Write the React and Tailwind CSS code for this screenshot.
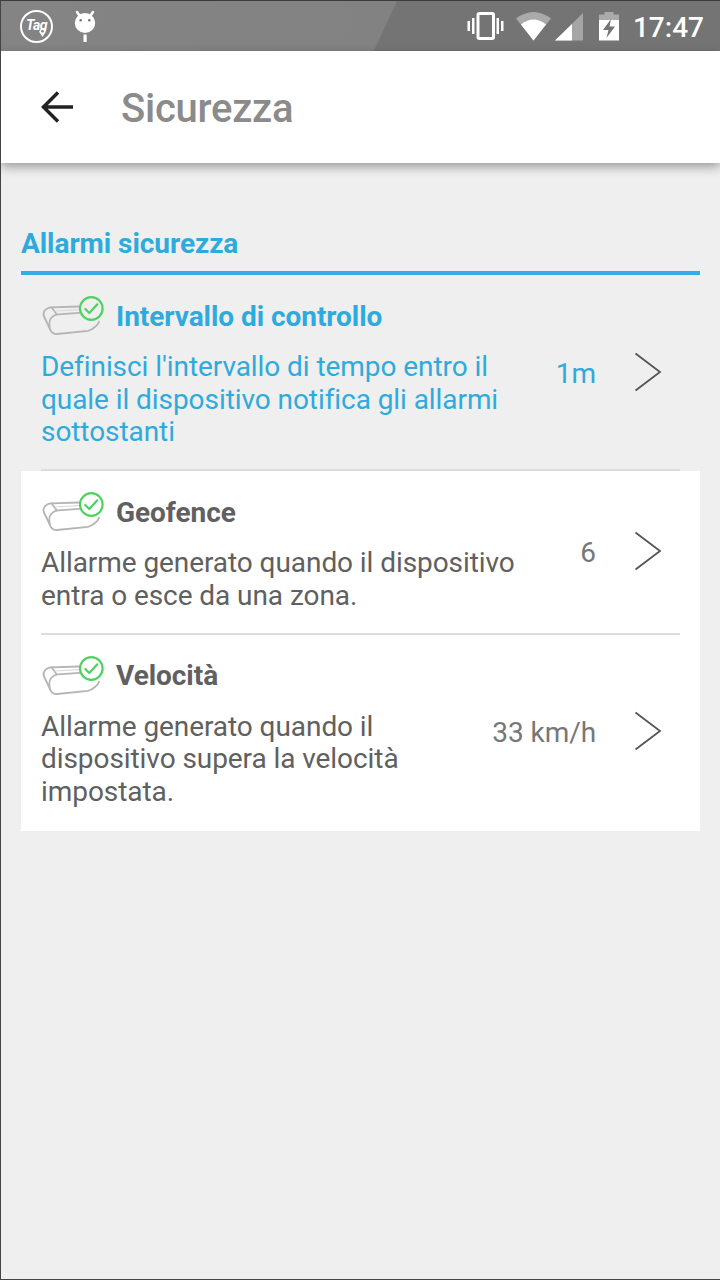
import React from 'react'

const alarms = [
  {
    title: 'Intervallo di controllo',
    text: ["Definisci l'intervallo di tempo entro il", 'quale il dispositivo notifica gli allarmi', 'sottostanti'],
    value: '1m',
    active: true,
  },
  {
    title: 'Geofence',
    text: ['Allarme generato quando il dispositivo', 'entra o esce da una zona.'],
    value: '6',
  },
  {
    title: 'Velocità',
    text: ['Allarme generato quando il', 'dispositivo supera la velocità', 'impostata.'],
    value: '33 km/h',
  },
]

const DeviceIcon = () => (
  <svg className="w-[63px] h-11 shrink-0" viewBox="0 0 63 44" fill="none" strokeLinecap="round" strokeLinejoin="round">
    <g stroke="#b5b5b5" strokeWidth="1.800">
      <path d="M38 12.500 L10 13.300 C5 13.500 1.500 18 2.800 22 L8.500 34 Q10.500 40.500 16 40 L47 36.800 Q50 36.300 54 33 Q57 31 58 27.700" />
      <path d="M38.500 18.900 L17 20.300 C11 21 8 25.500 8.300 30 L8.800 35" />
      <path d="M10.700 13.500 L15.500 20" />
    </g>
    <path d="M14 17 L38 15.700" stroke="#dcdcdc" strokeWidth="1.200" />
    <circle cx="50.300" cy="14.500" r="11.300" stroke="#4cd35e" strokeWidth="2.200" />
    <path d="M44.300 15 L48.300 19 L56.300 10.300" stroke="#4cd35e" strokeWidth="2.200" />
  </svg>
)

const StatusBar = () => (
  <div className="h-[51px] shrink-0 border-t border-[#3c3c3c] bg-linear-[115deg,#848484_0%,#828282_53.200%,#747474_53.500%,#747474_100%] pl-[19px] pr-4 flex items-center justify-between">
    <div className="flex items-center gap-5">
      <div className="relative size-[33px] rounded-full border-2 border-white flex items-center justify-center">
        <span className="text-white text-[14px] leading-none font-bold italic tracking-[-0.5px] pb-[2px]">Tag</span>
        <svg className="absolute left-[17px] top-[16px] w-[7px] h-[9px]" viewBox="0 0 7 9">
          <path d="M3.500 9 L0.800 4.800 A3 3 0 1 1 6.200 4.800z" fill="white" />
          <circle cx="3.500" cy="3.300" r="1.300" fill="#848484" />
        </svg>
      </div>
      <svg className="w-6 h-8" viewBox="0 0 24 32" fill="white">
        <path d="M4 2 L7.500 7 M20 2 L16.500 7" stroke="white" strokeWidth="2.500" strokeLinecap="round" />
        <ellipse cx="12" cy="13" rx="10.200" ry="10" />
        <rect x="10.500" y="24.500" width="3.200" height="7.500" />
        <circle cx="7.700" cy="10.300" r="1.300" fill="#777" />
        <circle cx="16.300" cy="10.300" r="1.300" fill="#777" />
      </svg>
    </div>
    <div className="flex items-center">
      <svg className="w-[37px] h-8 mr-[12px]" viewBox="0 0 37 32" fill="white">
        <rect x="11" y="3.500" width="15.500" height="25" rx="1.500" fill="none" stroke="white" strokeWidth="3" />
        <path d="M0.500 11 h2.500 v10 h-2.500z M5 8 h2.500 v16 h-2.500z M29.500 8 h2.500 v16 h-2.500z M34 11 h2.500 v10 h-2.500z" />
      </svg>
      <svg className="w-9 h-8 mr-[3px]" viewBox="0 0 36 32">
        <path d="M0 8.500 Q17.500 -4.500 35 8.500 L17.500 30.500z" fill="#aaa" />
        <path d="M5 14.500 Q17.500 4.500 30 14.500 L17.500 30.500z" fill="white" />
      </svg>
      <svg className="w-7 h-8 mr-4" viewBox="0 0 28 32">
        <path d="M0 30.500 L28 3 V30.500z" fill="#a5a5a5" />
        <path d="M0 30.500 L17 14 V30.500z" fill="white" />
      </svg>
      <svg className="w-5 h-8 mr-[14px]" viewBox="0 0 20 32">
        <path d="M0 10 V4.500 H5.500 V2 H14.500 V4.500 H20 V10z" fill="#aaa" />
        <path d="M0 10 H20 V30.500 H0z" fill="white" />
        <path d="M12 9 L4 20 H9.500 L7.500 28 L16 16.500 H10.500z" fill="#747474" />
      </svg>
      <span className="mt-[3px] text-white text-[28px] leading-none font-medium">17:47</span>
    </div>
  </div>
)

const AlarmRow = ({ alarm, last }) => (
  <div className={alarm.active ? 'px-5 text-[#2eaadc]' : 'px-5 bg-white text-[#606060]'}>
    <div className={last ? 'flex items-center pt-[19px] pb-[22px]' : 'flex items-center pt-[19px] pb-5 border-b-2 border-[#dcdcdc]'}>
      <div className="flex-1">
        <div className="flex items-center h-11 mb-[13px]">
          <DeviceIcon />
          <h2 className="ml-3 text-[28px] leading-[33px] tracking-[-0.05px] font-bold whitespace-nowrap">{alarm.title}</h2>
        </div>
        <div className="text-[28px] leading-[32.700px] tracking-[-0.07px] whitespace-nowrap">
          {alarm.text.map((line) => (
            <p key={line}>{line}</p>
          ))}
        </div>
      </div>
      <span className={alarm.active ? 'mt-[3px] text-[28px] leading-[33px]' : 'mt-[3px] text-[28px] leading-[33px] tracking-[-0.07px] text-[#777]'}>
        {alarm.value}
      </span>
      <svg className="w-[28px] h-10 ml-[38px] mr-[18px] shrink-0" viewBox="0 0 28 40" fill="none">
        <path d="M1.500 1.500 L26 20 L1.500 38.500" stroke="#555" strokeWidth="1.800" />
      </svg>
    </div>
  </div>
)

const App = () => {
  return (
    <div className="w-[720px] h-[1280px] flex flex-col overflow-hidden bg-[#efefef] border-l border-b border-[#444] font-['Roboto',sans-serif]">
      <StatusBar />
      <header className="relative h-28 shrink-0 bg-white shadow-[0_4px_10px_rgba(0,0,0,0.35)] flex items-center pl-10">
        <svg className="w-8 h-8" viewBox="0 0 32 32" fill="none" stroke="#222" strokeWidth="3.500">
          <path d="M17 1.500 L2.500 16 L17 30.500 M2.500 16 H32" />
        </svg>
        <h1 className="ml-12 mt-1 text-[40px] leading-none tracking-[-0.25px] font-medium text-[#8b8b8b]">Sicurezza</h1>
      </header>

      <main className="px-5 pt-16">
        <div className="h-12 border-b-4 border-[#35ade0]">
          <h2 className="text-[28px] leading-[33px] tracking-[-0.05px] font-bold text-[#2eaadc]">Allarmi sicurezza</h2>
        </div>
        {alarms.map((alarm, i) => (
          <AlarmRow key={alarm.title} alarm={alarm} last={i === alarms.length - 1} />
        ))}
      </main>
    </div>
  )
}

export default App
